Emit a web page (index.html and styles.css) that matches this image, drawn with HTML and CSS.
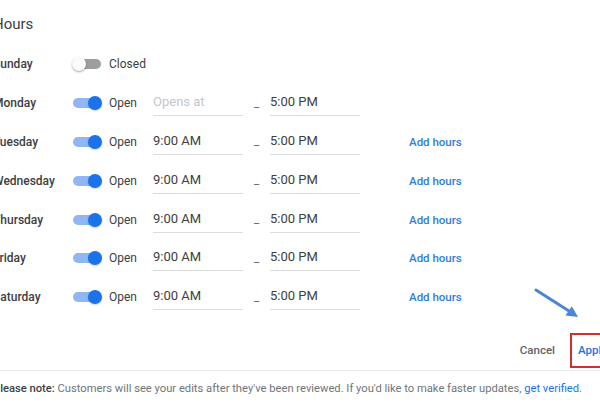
FILE: index.html
```html
<!DOCTYPE html>
<html lang="en">
<head>
  <meta charset="UTF-8">
  <meta name="viewport" content="width=device-width, initial-scale=1.0">
  <title>Hours</title>
  <link rel="stylesheet" href="styles.css">
</head>
<body>

<div class="hours-panel">
  <h2 class="hours-title">Hours</h2>

  <!-- One row per day -->
  <div class="day-row">
    <span class="day-name">Sunday</span>
    <span class="switch"></span>
    <span class="day-status">Closed</span>
  </div>

  <div class="day-row">
    <span class="day-name">Monday</span>
    <span class="switch on"></span>
    <span class="day-status">Open</span>
    <span class="time-field empty">Opens at</span>
    <span class="dash">–</span>
    <span class="time-field">5:00 PM</span>
  </div>

  <div class="day-row">
    <span class="day-name">Tuesday</span>
    <span class="switch on"></span>
    <span class="day-status">Open</span>
    <span class="time-field">9:00 AM</span>
    <span class="dash">–</span>
    <span class="time-field">5:00 PM</span>
    <a href="#" class="add-hours">Add hours</a>
  </div>

  <div class="day-row">
    <span class="day-name">Wednesday</span>
    <span class="switch on"></span>
    <span class="day-status">Open</span>
    <span class="time-field">9:00 AM</span>
    <span class="dash">–</span>
    <span class="time-field">5:00 PM</span>
    <a href="#" class="add-hours">Add hours</a>
  </div>

  <div class="day-row">
    <span class="day-name">Thursday</span>
    <span class="switch on"></span>
    <span class="day-status">Open</span>
    <span class="time-field">9:00 AM</span>
    <span class="dash">–</span>
    <span class="time-field">5:00 PM</span>
    <a href="#" class="add-hours">Add hours</a>
  </div>

  <div class="day-row">
    <span class="day-name">Friday</span>
    <span class="switch on"></span>
    <span class="day-status">Open</span>
    <span class="time-field">9:00 AM</span>
    <span class="dash">–</span>
    <span class="time-field">5:00 PM</span>
    <a href="#" class="add-hours">Add hours</a>
  </div>

  <div class="day-row">
    <span class="day-name">Saturday</span>
    <span class="switch on"></span>
    <span class="day-status">Open</span>
    <span class="time-field">9:00 AM</span>
    <span class="dash">–</span>
    <span class="time-field">5:00 PM</span>
    <a href="#" class="add-hours">Add hours</a>
  </div>

  <!-- Dialog buttons -->
  <div class="actions">
    <button class="btn cancel-btn">Cancel</button>
    <button class="btn apply-btn">Apply</button>
  </div>

  <p class="note"><b>Please note:</b> Customers will see your edits after they've been reviewed. If you'd like to make faster updates, <a href="#">get verified</a>.</p>
</div>

<!-- Pointer arrow towards Apply -->
<svg class="pointer-arrow" width="60" height="45" viewBox="0 0 60 45">
  <line x1="6" y1="8" x2="39" y2="29" stroke="#4a86d6" stroke-width="3" stroke-linecap="round"/>
  <polygon points="48,35 35.5,33.6 41.8,24.2" fill="#4a86d6"/>
</svg>

</body>
</html>
```

FILE: styles.css
```css
* {
  margin: 0;
  padding: 0;
  box-sizing: border-box;
}
body {
  font-family: Roboto, 'Liberation Sans', sans-serif;
  background: #ffffff;
  color: #3c4043;
  width: 600px;
  height: 403px;
  overflow: hidden;
  position: relative;
}
.hours-panel {
  margin-left: -7px;
  padding-top: 14px;
}
.hours-title {
  font-size: 15px;
  font-weight: 400;
  line-height: 20px;
  color: #3c4043;
  margin-bottom: 11px;
}
/* Day rows */
.day-row {
  display: flex;
  align-items: center;
  height: 38.8px;
  font-size: 12px;
}
.day-name {
  width: 80px;
  font-weight: 500;
  color: #3c4043;
}
.switch {
  position: relative;
  width: 28px;
  height: 10px;
  border-radius: 5px;
  background: #9e9e9e;
  margin-right: 8px;
}
.switch::after {
  content: "";
  position: absolute;
  left: -1px;
  top: -2px;
  width: 14px;
  height: 14px;
  border-radius: 50%;
  background: #fafafa;
  box-shadow: 0 1px 2px rgba(0, 0, 0, 0.35);
}
.switch.on {
  background: #90b7f4;
}
.switch.on::after {
  left: auto;
  right: -1px;
  background: #1a73e8;
  box-shadow: 0 1px 2px rgba(0, 0, 0, 0.2);
}
.day-status {
  width: 44px;
  color: #3c4043;
}
.time-field {
  width: 90px;
  height: 26px;
  line-height: 24px;
  font-size: 13px;
  color: #3c4043;
  border-bottom: 1px solid #dadce0;
}
.time-field.empty {
  color: #c4c7cc;
}
.dash {
  width: 27px;
  text-align: center;
  color: #5f6368;
  font-size: 11px;
  padding-top: 8px;
}
.add-hours {
  margin-left: 49px;
  font-size: 11.5px;
  font-weight: 500;
  color: #2f7de1;
  text-decoration: none;
}
/* Footer buttons */
.actions {
  display: flex;
  justify-content: flex-end;
  align-items: center;
  margin-top: 15px;
  margin-right: -30px;
  height: 37px;
}
.btn {
  font-family: inherit;
  font-size: 11.5px;
  font-weight: 500;
  background: none;
  border: none;
  height: 35px;
}
.cancel-btn {
  color: #5f6368;
  padding: 0 8px;
  margin-right: 7px;
}
.apply-btn {
  color: #1a73e8;
  border: 2px solid #d32f2f;
  padding: 0 20px 0 6px;
  width: 60px;
  text-align: left;
}
.note {
  border-top: 1px solid #e8eaed;
  margin-top: 1px;
  padding-top: 11px;
  font-size: 11.2px;
  color: #70757a;
  width: 640px;
}
.note b {
  font-weight: 500;
  color: #3c4043;
}
.note a {
  color: #1a73e8;
  text-decoration: none;
}
/* Overlay arrow */
.pointer-arrow {
  position: absolute;
  left: 530px;
  top: 282px;
}
```
